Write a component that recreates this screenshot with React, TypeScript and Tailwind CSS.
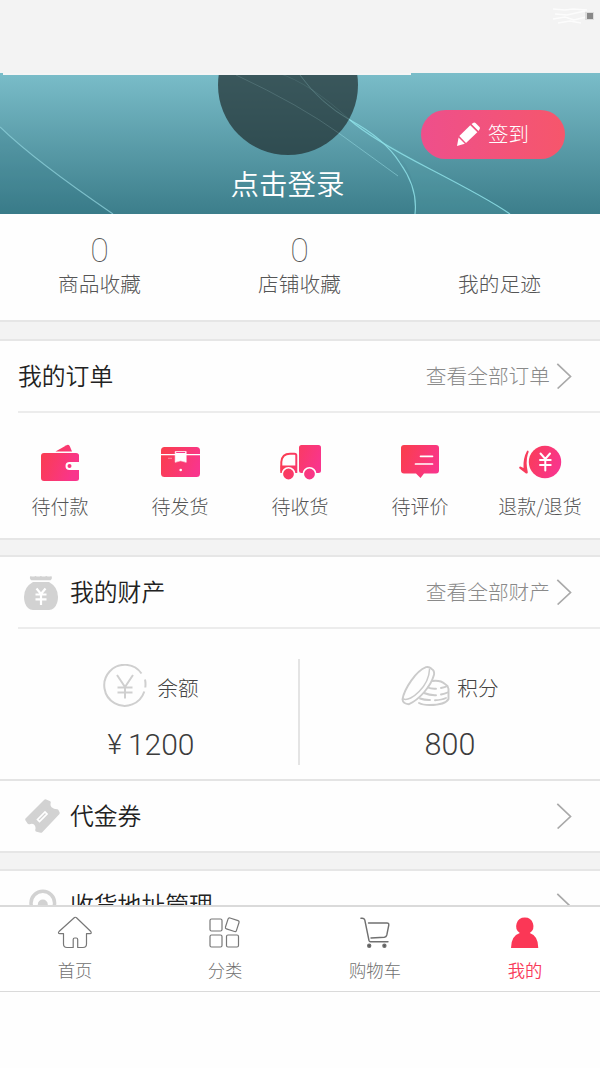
import React from "react";

const PINK_ID = "pinkFade";

function GradientDefs() {
  return (
    <svg className="absolute h-0 w-0" aria-hidden="true">
      <defs>
        <linearGradient id={PINK_ID} gradientUnits="userSpaceOnUse" x1="4" y1="14" x2="40" y2="28">
          <stop offset="0" stopColor="#fa3d50" />
          <stop offset="1" stopColor="#f9358c" />
        </linearGradient>
      </defs>
    </svg>
  );
}

const pink = `url(#${PINK_ID})`;

function Chevron() {
  return (
    <svg className="h-[28px] w-[16px] shrink-0" viewBox="0 0 16 28" fill="none" stroke="#a9a9a9" strokeWidth="1.7">
      <path d="M1.3 2.8 14.5 15.5 1.6 27.500" />
    </svg>
  );
}

function WalletIcon() {
  return (
    <svg width="44" height="44" viewBox="0 0 44 44" fill={pink}>
      <path d="M17.500 11.500 28.500 5.200q2-1 3.200.8L34 11.500Z" />
      <path d="M6 13h34q3 0 3 2.500V22h-9.500a4 4 0 0 0 0 8H43v8.500q0 2.500-3 2.500H8q-3 0-3-3V16q0-3 3-3Z" transform="translate(-2)" />
      <circle cx="31.500" cy="26" r="2" />
    </svg>
  );
}

function BoxIcon() {
  return (
    <svg width="44" height="44" viewBox="0 0 44 44">
      <rect x="3" y="7" width="39" height="30" rx="3.500" fill={pink} />
      <path d="M3 14.700h39" stroke="#fff" strokeWidth="1.200" />
      <path d="M17.200 11.500h11v10.800q-5.500-3-11 0Z" fill="#fff" stroke="#fff" strokeWidth=".6" />
      <path d="M18.200 12.500h9" stroke="#f8398d" strokeWidth="1" />
      <path d="M10 18.300h4" stroke="#fff" strokeWidth=".7" opacity=".6" />
      <circle cx="22.700" cy="30" r="1.300" fill="#fff" />
    </svg>
  );
}

function TruckIcon() {
  return (
    <svg width="44" height="44" viewBox="0 0 44 44" fill={pink}>
      <rect x="21" y="5" width="22" height="28" rx="2.500" />
      <path d="M3.300 32V22Q4 13.800 12 13.800h4.500q1.800 0 1.800 1.800V32Z" fill="none" stroke={pink} strokeWidth="2" />
      <path d="M2.500 25.500H19V32.500H4q-1.500 0-1.500-2Z" />
      <circle cx="10.500" cy="34" r="6.200" stroke="#fff" strokeWidth="1.600" />
      <circle cx="31.500" cy="34" r="6.200" stroke="#fff" strokeWidth="1.600" />
    </svg>
  );
}

function ReviewIcon() {
  return (
    <svg width="44" height="44" viewBox="0 0 44 44">
      <path fill={pink} d="M6 5h32q3 0 3 3v22.500q0 3-3 3h-12L22.500 38l-4.500-4.500H6q-3 0-3-3V8q0-3 3-3Z" />
      <path d="M22.500 16.300H34.500M17.500 24H34.500" stroke="#fff" strokeWidth="1.700" strokeLinecap="round" />
    </svg>
  );
}

function RefundIcon() {
  return (
    <svg width="44" height="44" viewBox="0 0 44 44">
      <circle cx="27" cy="22" r="16.200" fill={pink} />
      <path d="m22.500 13.500 4.800 5.500 4.700-5.500M27.300 19v11.500M22 20h10.700M22 25h10.700" fill="none" stroke="#fff" strokeWidth="2" strokeLinecap="round" />
      <path d="M9 11q1-1 1.600.2.200 1-.8 3Q7.500 22 9.800 32.200 9.800 34 8 33.500L1.500 28.500Q.5 26.500 2.500 26.500L5.500 28Q5 18 9 11Z" fill="#f83c5c" />
    </svg>
  );
}

function MoneyBagIcon() {
  return (
    <svg className="h-[36px] w-[36px] shrink-0" viewBox="0 0 36 36">
      <path d="M7.500 1q2.500 1.200 5 0 2.700 1.200 5.400 0 2.700 1.200 5.400 0 2.700 1.200 5 0 1.600 2.300-.8 4.300H8.300Q5.900 3.300 7.500 1Z" fill="#d2d2d2" />
      <path d="M10 7h16q9 5 9 15 0 7-4 11-2 2-5 2H10q-3 0-5-2-4-4-4-11Q1 12 10 7Z" fill="#d2d2d2" />
      <path d="m13.500 13.500 4.500 5.500 4.500-5.500M18 19v11M12.500 19.500h11M12.500 24.300h11" fill="none" stroke="#fff" strokeWidth="2.200" />
    </svg>
  );
}

function BalanceIcon() {
  return (
    <svg className="h-[44px] w-[44px]" viewBox="0 0 44 44" fill="none" stroke="#cfcfcf">
      <path d="M38.500 9.500A20.500 20.500 0 1 0 41.300 27.500M42 15.500q.8 3.500.3 8" strokeWidth="2" />
      <path d="m14 11 8 12 8-12M22 23v11.500M14.500 23.500h15M14.500 28.500h15" strokeWidth="2" />
    </svg>
  );
}

function CoinsIcon() {
  return (
    <svg className="h-[42px] w-[50px]" viewBox="0 0 50 42" fill="none" stroke="#cbcbcb" strokeWidth="1.900" strokeLinecap="round">
      <path d="M1.500 34.500C3 24 15 6 25 2.200q3-.8 5.500 1.600 3.300 1.600 2.500 6C30 21 19 34 8 39.200q-6-.2-6.500-4.700Z" />
      <path d="M2.500 34C10 37 28 21 28.500 4.500" strokeWidth="1.500" />
      <path d="M31.500 16q8-1 12.500 3 4 2.500 3.500 7v8q-3 6-19 6-7 0-10.500-2" />
      <path d="M27 22.500q3 1.500 8 1.200M40 23q4-.7 6.500-2M23 28q6 2.500 12 2.200M40 29.500q4-.7 6.500-2M19 33.500q5 1.700 10 1.500M34 35.200q7-.2 11-2.200" />
    </svg>
  );
}

function CouponIcon() {
  return (
    <svg className="h-[36px] w-[36px] shrink-0" viewBox="0 0 36 36">
      <path
        d="M21.500 3 25 4.500q-1 4 1.500 6t6.500 2.500L34 15 17 33 13 32q1-4-1.500-6.500T5 24.500L3 21.500Z"
        fill="#d2d2d2"
        stroke="#d2d2d2"
        strokeWidth="3.500"
        strokeLinejoin="round"
      />
      <path d="m13.500 21.500 7.500-7.500 2 2-7.500 7.500Z" fill="none" stroke="#fff" strokeWidth="1.700" />
    </svg>
  );
}

function PinIcon() {
  return (
    <svg className="h-[36px] w-[36px] shrink-0" viewBox="0 0 36 36" fill="none" stroke="#d2d2d2" strokeWidth="3.500">
      <path d="M18.500 36Q7 24 7 16a11.800 11.800 0 0 1 23.600 0Q30.500 24 18.500 36Z" />
      <circle cx="18.800" cy="17.500" r="5" fill="#d2d2d2" stroke="none" />
    </svg>
  );
}

function HeroWaves() {
  return (
    <svg className="absolute inset-0 h-full w-full" viewBox="0 0 600 141" preserveAspectRatio="none" fill="none">
      <path d="M0 54Q35 88 113 141H0Z" fill="#2e7180" opacity=".18" />
      <path d="M350 47Q390 72 403 88T415 141H510Q470 118 400 78Q370 60 350 47Z" fill="#63b3bd" opacity=".16" />
      <path d="M0 54Q35 88 113 141" stroke="#8bcdd7" strokeWidth="1.200" opacity=".8" />
      <path d="M236 2Q300 32 340 61T398 103" stroke="#8fd5dd" strokeWidth=".9" opacity=".65" />
      <path d="M300 2Q320 30 350 47Q385 66 400 90Q418 115 415 141" stroke="#8ee0e7" strokeWidth="1.200" opacity=".85" />
      <path d="M350 47Q370 65 430 96T510 141" stroke="#8ee0e7" strokeWidth="1.200" opacity=".85" />
    </svg>
  );
}

function AvatarWaves() {
  return (
    <svg className="absolute inset-x-0 bottom-0 h-[82px] w-[140px]" viewBox="0 0 140 82" fill="none" stroke="#8fb9bd">
      <path d="M18 2Q82 32 122 61" opacity=".2" />
      <path d="M82 2Q102 30 132 47" opacity=".25" />
      <path d="M60 0Q92 10 132 47" opacity=".15" />
    </svg>
  );
}

function Hero() {
  return (
    <section className="relative h-[141px] shrink-0 overflow-hidden bg-gradient-to-b from-[#7abdc9] to-[#3c7e8b]">
      <HeroWaves />
      <div className="absolute top-[-58px] left-[218px] h-[140px] w-[140px] overflow-hidden rounded-full bg-[#202c2e]/70">
        <AvatarWaves />
      </div>
      <div className="absolute top-0 left-[3px] h-[2px] w-[408px] bg-[#f5f5f5]" />
      <div className="relative flex h-full items-end justify-center pr-[25px] pb-[17px]">
        <span className="text-[28.500px] leading-[28px] text-white">点击登录</span>
      </div>
      <button className="absolute top-[37px] left-[421px] flex h-[49px] w-[144px] items-center rounded-full bg-gradient-to-r from-[#ee4f8b] to-[#f6566b] pb-[1px] pl-[35px] text-white">
        <svg className="h-[25px] w-[25px]" viewBox="0 0 25 25" fill="#fff">
          <path d="m15.500 2 2-1.300q1-.6 2 .3l4 4q.9 1 .2 2L22.500 9Z" />
          <path d="m14.300 3.300 7 7L10 21 3.300 14Z" />
          <path d="m2.600 15.500 6.200 6.300L1 24Z" />
        </svg>
        <span className="ml-[7px] pb-[1px] text-[20.500px] leading-none font-light">签到</span>
      </button>
    </section>
  );
}

function Stat({ value, label }: { value: string; label: string }) {
  return (
    <div className="flex h-full w-[200px] flex-col items-center pt-[19px] pr-[1px] font-light text-[#555]">
      <span className="h-[34px] font-[Roboto] text-[34px] leading-[34px] font-thin">{value}</span>
      <span className="mt-[5px] text-[20.700px] leading-[22px]">{label}</span>
    </div>
  );
}

function Gap({ className }: { className: string }) {
  return <div className={`shrink-0 border-y-2 border-[#e6e6e6] bg-[#f3f3f3] ${className}`} />;
}

const orders = [
  { label: "待付款", Icon: WalletIcon },
  { label: "待发货", Icon: BoxIcon },
  { label: "待收货", Icon: TruckIcon },
  { label: "待评价", Icon: ReviewIcon },
  { label: "退款/退货", Icon: RefundIcon },
];

function TabBar() {
  return (
    <nav className="flex h-[87px] shrink-0 border-t-2 border-b border-[#dadada] bg-white text-[17.300px] font-light text-[#707070]">
      <div className="flex w-[150px] flex-col items-center pt-[8px]">
        <svg width="36" height="36" viewBox="0 0 36 36" fill="none" stroke="#777" strokeWidth="1.200" strokeLinejoin="round">
          <path d="M17.500 2.500 2 16.500q-1.500 2 1 2.200h3.500V29q0 3.500 3.500 3.500h6.200v-8q0-1.500 1.500-1.500h1.500q1.500 0 1.500 1.500v8H26q3.500 0 3.500-3.500V18.700H33q2-.2.800-2.200L19.500 2.800q-1-.9-2-.3Z" />
        </svg>
        <span className="mt-[9px] leading-[20px]">首页</span>
      </div>
      <div className="flex w-[150px] flex-col items-center pt-[8px]">
        <svg width="36" height="36" viewBox="0 0 36 36" fill="none" stroke="#777" strokeWidth="1.200">
          <rect x="3" y="4" width="12" height="12" rx="1.500" />
          <rect x="19.500" y="4" width="11.500" height="11.500" rx="1.500" transform="rotate(18 25.250 9.750)" />
          <rect x="3" y="20" width="12" height="12" rx="1.500" />
          <rect x="19.500" y="20" width="12" height="12" rx="1.500" />
        </svg>
        <span className="mt-[9px] leading-[20px]">分类</span>
      </div>
      <div className="flex w-[150px] flex-col items-center pt-[8px]">
        <svg width="36" height="36" viewBox="0 0 36 36" fill="none" stroke="#707070" strokeWidth="1.400" strokeLinecap="round" strokeLinejoin="round">
          <path d="M4 3.300q3-.6 3.800 1.700L12 25.500q.3 1.200 1.500 1.200H31" />
          <path d="M11.500 8H30q2 0 1.800 2l-2 10q-.5 2-2.500 2.200L14 23" />
          <circle cx="12.200" cy="30.700" r="1.500" fill="#555" />
          <circle cx="27.400" cy="30.700" r="1.500" fill="#555" />
        </svg>
        <span className="mt-[9px] leading-[20px]">购物车</span>
      </div>
      <div className="flex w-[150px] flex-col items-center pt-[8px] text-[#f93b5b]">
        <svg width="36" height="36" viewBox="0 0 36 36" fill="#fb3756">
          <path d="M17.800 2.500a8.600 8.600 0 0 1 5 15.600Q31.300 21 31.300 33H4Q4 21 12.800 18.100a8.600 8.600 0 0 1 5-15.600Z" />
        </svg>
        <span className="mt-[9px] leading-[20px] font-[350]">我的</span>
      </div>
    </nav>
  );
}

export default function App() {
  return (
    <div className="relative flex h-[1068px] w-[600px] flex-col overflow-hidden bg-[#fefefe] font-['Noto_Sans_CJK_SC',sans-serif] font-[350]">
      <GradientDefs />
      <header className="flex h-[73px] shrink-0 justify-end bg-[#f3f3f3] pt-[7px] pr-[5px]">
        <svg width="42" height="18" viewBox="0 0 42 18" fill="none" stroke="#fff" strokeWidth="1.500">
          <path d="M0 2l12 1 8-1 14 1M2 7l12 1 18-4M0 12l12-2 9 3 12-3M5 16l12-2 11 2" opacity=".75" />
          <rect x="32" y="5" width="9" height="8" fill="#ddd" stroke="none" />
          <rect x="34" y="6" width="6" height="6" fill="#888" stroke="none" />
        </svg>
      </header>
      <Hero />

      <main className="flex h-[691px] shrink-0 flex-col overflow-hidden">
        <section className="flex h-[106px] shrink-0">
          <Stat value="0" label="商品收藏" />
          <Stat value="0" label="店铺收藏" />
          <Stat value="" label="我的足迹" />
        </section>
        <Gap className="h-[21px]" />

        <section className="h-[197px] shrink-0">
          <div className="ml-[18px] flex h-[72px] items-center border-b-2 border-[#ececec] pr-[28px] pb-[2px]">
            <h2 className="flex-1 text-[23.800px] leading-none text-[#222]">我的订单</h2>
            <span className="mr-[6px] text-[20.700px] leading-none font-light text-[#8a8a8a]">查看全部订单</span>
            <Chevron />
          </div>
          <div className="flex pt-[27px]">
            {orders.map(({ label, Icon }) => (
              <div key={label} className="flex w-[120px] flex-col items-center">
                <Icon />
                <span className="mt-[12px] text-[19px] leading-[20px] font-light text-[#555]">{label}</span>
              </div>
            ))}
          </div>
        </section>
        <Gap className="h-[19px]" />

        <section className="h-[222px] shrink-0">
          <div className="ml-[18px] flex h-[72px] items-center border-b-2 border-[#ececec] pr-[28px] pb-[2px] pl-[5px]">
            <div className="pt-[4px]">
              <MoneyBagIcon />
            </div>
            <h2 className="ml-[11px] flex-1 text-[23.800px] leading-none text-[#222]">我的财产</h2>
            <span className="mr-[6px] text-[20.700px] leading-none font-light text-[#8a8a8a]">查看全部财产</span>
            <Chevron />
          </div>
          <div className="flex pt-[30px] font-light text-[#444]">
            <div className="flex h-[106px] w-[300px] flex-col items-center border-r-2 border-[#e4e4e4] pl-[4px]">
              <div className="flex h-[54px] items-center gap-[10px]">
                <BalanceIcon />
                <span className="pt-[2px] text-[20.700px] leading-none">余额</span>
              </div>
              <div className="mt-[17px] flex items-center text-[30px] leading-[30px] text-[#3c3c3c]">
                <span className="mr-[6px] font-[Roboto] text-[28px]">¥</span>
                <span className="font-[Roboto] text-[30px]">1200</span>
              </div>
            </div>
            <div className="flex h-[106px] w-[300px] flex-col items-center">
              <div className="flex h-[54px] items-center gap-[6px]">
                <CoinsIcon />
                <span className="pt-[2px] text-[20.700px] leading-none">积分</span>
              </div>
              <span className="mt-[17px] font-[Roboto] text-[30.500px] leading-[30px] text-[#3c3c3c]">800</span>
            </div>
          </div>
        </section>

        <section className="flex h-[72px] shrink-0 items-center border-t-2 border-[#e4e4e4] pr-[28px] pb-[2px] pl-[24px]">
          <div className="pt-[2px]">
            <CouponIcon />
          </div>
          <h2 className="ml-[10px] flex-1 pb-[1px] text-[23.800px] leading-none text-[#222]">代金券</h2>
          <Chevron />
        </section>
        <Gap className="h-[20px]" />
        <section className="flex h-[70px] shrink-0 items-center pr-[28px] pb-[2px] pl-[24px]">
          <PinIcon />
          <h2 className="ml-[10px] flex-1 pb-[2px] text-[23.800px] leading-none text-[#222]">收货地址管理</h2>
          <Chevron />
        </section>
      </main>
      <TabBar />
    </div>
  );
}
